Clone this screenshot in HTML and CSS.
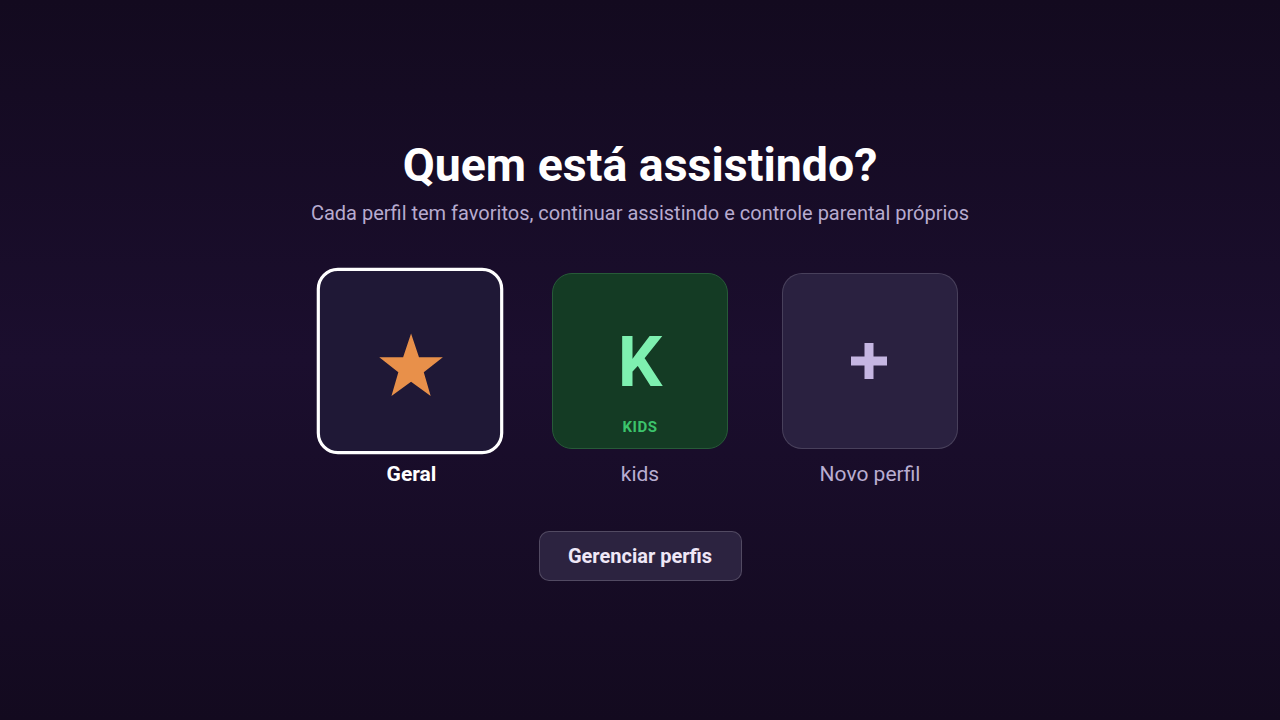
FILE: index.html
```html
<!DOCTYPE html>
<html lang="pt-BR">
<head>
<meta charset="utf-8">
<title>Quem está assistindo?</title>
<link rel="stylesheet" href="styles.css">
</head>
<body>
<main class="screen">
  <h1 class="title">Quem está assistindo?</h1>
  <p class="subtitle">Cada perfil tem favoritos, continuar assistindo e controle parental próprios</p>
  <div class="profiles">
    <div class="profile">
      <div class="tile tile-geral selected">
        <svg class="star" width="64" height="64" viewBox="0 0 64 64"><polygon points="32,2 39.5,24.5 62,24.5 44,38.5 50.5,61 32,47.5 13.5,61 20,38.5 2,24.5 24.5,24.5" fill="#e8904a"/></svg>
      </div>
      <span class="label label-active">Geral</span>
    </div>
    <div class="profile">
      <div class="tile tile-kids">
        <span class="initial">K</span>
        <span class="badge">KIDS</span>
      </div>
      <span class="label">kids</span>
    </div>
    <div class="profile">
      <div class="tile tile-new">
        <svg class="plus" width="36" height="36" viewBox="0 0 36 36"><rect x="13.5" y="0" width="9" height="36" fill="#c5b6e2"/><rect x="0" y="13.5" width="36" height="9" fill="#c5b6e2"/></svg>
      </div>
      <span class="label">Novo perfil</span>
    </div>
  </div>
  <button class="manage">Gerenciar perfis</button>
</main>
</body>
</html>
```

FILE: styles.css
```css
html, body {
  margin: 0;
  padding: 0;
}
body {
  background: linear-gradient(180deg, #130a1f 0%, #1b0e2e 50%, #130a1f 100%);
  font-family: Roboto, "Noto Sans", "Liberation Sans", sans-serif;
  color: #fff;
  width: 1280px;
  height: 720px;
  overflow: hidden;
}
.screen {
  height: 720px;
  display: flex;
  flex-direction: column;
  align-items: center;
  justify-content: center;
}
.title {
  margin: 0;
  font-size: 46.5px;
  line-height: 52px;
  font-weight: 700;
  color: #ffffff;
}
.subtitle {
  margin: 10px 0 0;
  font-size: 20px;
  line-height: 24px;
  color: #b7abcf;
}
.profiles {
  margin-top: 48px;
  display: flex;
  gap: 54px;
}
.profile {
  display: flex;
  flex-direction: column;
  align-items: center;
  width: 176px;
}
.tile {
  width: 176px;
  height: 176px;
  box-sizing: border-box;
  border-radius: 20px;
  display: flex;
  align-items: center;
  justify-content: center;
  position: relative;
}
.tile-geral {
  background: #1f1836;
  border: 1px solid rgba(255,255,255,0.1);
}
.tile.selected {
  border: 3px solid #ffffff;
  transform: scale(1.06);
}
.star {
  display: block;
  margin-top: 8px;
  margin-left: 2px;
}
.tile-kids {
  background: #143b24;
  border: 1px solid #275a38;
}
.initial {
  font-size: 70px;
  line-height: 1;
  font-weight: 700;
  color: #7ef0b0;
  margin-top: 1px;
}
.badge {
  position: absolute;
  left: 0;
  right: 0;
  bottom: 12px;
  text-align: center;
  font-size: 15px;
  font-weight: 700;
  color: #3cc46c;
  letter-spacing: 0.5px;
}
.tile-new {
  background: #2a2140;
  border: 1px solid rgba(255,255,255,0.14);
}
.plus {
  display: block;
  margin-left: -2px;
}
.label {
  margin-top: 13px;
  font-size: 21px;
  line-height: 24px;
  color: #b9aed1;
}
.label-active {
  color: #ffffff;
  font-weight: 700;
  margin-left: 3px;
}
.manage {
  margin-top: 45px;
  width: 203px;
  height: 50px;
  border-radius: 10px;
  background: #2c2340;
  border: 1px solid rgba(255,255,255,0.18);
  color: #efe7f7;
  font-family: Roboto, "Noto Sans", "Liberation Sans", sans-serif;
  font-size: 20px;
  font-weight: 700;
  cursor: pointer;
}
```
